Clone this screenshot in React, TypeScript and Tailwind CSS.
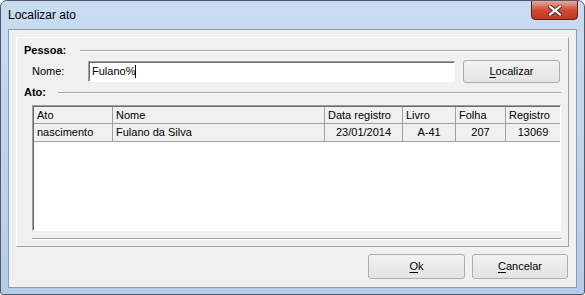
import React from 'react';

interface Column {
  label: string;
  width: string;
  align: string;
}

const columns: Column[] = [
  { label: 'Ato', width: 'w-[79px]', align: 'text-left pl-[3px]' },
  { label: 'Nome', width: 'w-[212px]', align: 'text-left pl-[3px]' },
  { label: 'Data registro', width: 'w-[78px]', align: 'text-center' },
  { label: 'Livro', width: 'w-[53px]', align: 'text-center' },
  { label: 'Folha', width: 'w-[50px]', align: 'text-center' },
  { label: 'Registro', width: 'flex-1', align: 'text-center' },
];

const rows = [['nascimento', 'Fulano da Silva', '23/01/2014', 'A-41', '207', '13069']];

function EtchedLine({ className = '' }: { className?: string }) {
  return <div className={`h-[2px] border-t border-t-[#a0a0a0] border-b border-b-white ${className}`} />;
}

function WinButton({ label, rest, className = '' }: { label: string; rest: string; className?: string }) {
  return (
    <button
      className={`flex items-center justify-center rounded-[3px] border border-[#acacac] bg-gradient-to-b from-[#f2f2f2] to-[#e3e3e3] text-[11px] text-black ${className}`}
    >
      <span className="underline underline-offset-2">{label}</span>
      {rest}
    </button>
  );
}

export default function App() {
  return (
    <div className="w-[585px] h-[295px] flex flex-col rounded-t-[7px] rounded-b-[3px] border border-[#4f5b6b] bg-gradient-to-b from-[#c9dcf1] to-[#b4cde9] font-['Liberation_Sans',Arial,sans-serif] text-black overflow-hidden">
      {/* Title bar */}
      <div className="h-[28px] flex items-start justify-between">
        <span className="pl-[7px] pt-[7px] text-[12px] leading-[15px]">Localizar ato</span>
        <button className="-mt-[1px] mr-[6px] w-[47px] h-[20px] flex items-center justify-center rounded-b-[4px] border border-[#5b2216] bg-gradient-to-b from-[#e9a99a] via-[#cf4a33] to-[#c13a22]">
          <svg width="14" height="11" viewBox="0 0 14 11">
            <path d="M2 1.5 L12 9.5 M12 1.5 L2 9.5" stroke="#4a2a25" strokeWidth="4" strokeLinecap="square" />
            <path d="M2 1.5 L12 9.5 M12 1.5 L2 9.5" stroke="#ffffff" strokeWidth="2.2" strokeLinecap="square" />
          </svg>
        </button>
      </div>

      {/* Client area */}
      <div className="mx-[7px] h-[259px] border border-[#8b9bb0] bg-[#f0f0f0] flex flex-col text-[11px] leading-[13px]">
        <div className="mx-[7px] mt-[7px] h-[210px] border border-white border-r-[#a0a0a0] border-b-[#a0a0a0] flex flex-col">
          {/* Pessoa */}
          <div className="mt-[6px] h-[13px] flex items-center pl-[7px] pr-[7px]">
            <span className="w-[56px] font-bold">Pessoa:</span>
            <EtchedLine className="flex-1" />
          </div>
          <div className="mt-[2px] h-[24px] flex items-center pl-[15px]">
            <span className="w-[56px]">Nome:</span>
            <div className="w-[367px] h-[21px] flex items-center border border-[#a0a0a0] border-r-white border-b-white bg-white shadow-[inset_1px_1px_0_#696969] pl-[3px]">
              <span>Fulano%</span>
              <span className="w-px h-[13px] bg-black" />
            </div>
            <WinButton label="L" rest="ocalizar" className="ml-[8px] w-[97px] h-[23px]" />
          </div>

          {/* Ato */}
          <div className="mt-[3px] h-[13px] flex items-center pl-[7px] pr-[7px]">
            <span className="w-[34px] font-bold">Ato:</span>
            <EtchedLine className="flex-1" />
          </div>
          <div className="mt-[6px] ml-[15px] mr-[7px] h-[126px] border border-[#a0a0a0] border-r-white border-b-white shadow-[inset_1px_1px_0_#696969] bg-white flex flex-col">
            <div className="flex h-[17px] mt-px ml-px bg-[#f0f0f0] border-b border-[#a0a0a0]">
              {columns.map((c) => (
                <div key={c.label} className={`${c.width} flex items-center pl-[3px] border-r border-[#a0a0a0] last:border-r-0`}>
                  {c.label}
                </div>
              ))}
            </div>
            {rows.map((r, i) => (
              <div key={i} className="flex h-[18px] ml-px bg-[#f0f0f0] border-b border-[#a0a0a0]">
                {r.map((v, j) => (
                  <div
                    key={j}
                    className={`${columns[j].width} ${columns[j].align} flex items-center ${j < 2 ? 'justify-start' : 'justify-center'} border-r border-[#a0a0a0] last:border-r-0`}
                  >
                    {v}
                  </div>
                ))}
              </div>
            ))}
          </div>
          <EtchedLine className="mt-[7px] ml-[15px] mr-[7px]" />
        </div>

        {/* Footer buttons */}
        <div className="mt-[7px] mr-[8px] flex justify-end gap-[7px]">
          <WinButton label="O" rest="k" className="w-[97px] h-[25px]" />
          <WinButton label="C" rest="ancelar" className="w-[96px] h-[25px]" />
        </div>
      </div>
    </div>
  );
}
